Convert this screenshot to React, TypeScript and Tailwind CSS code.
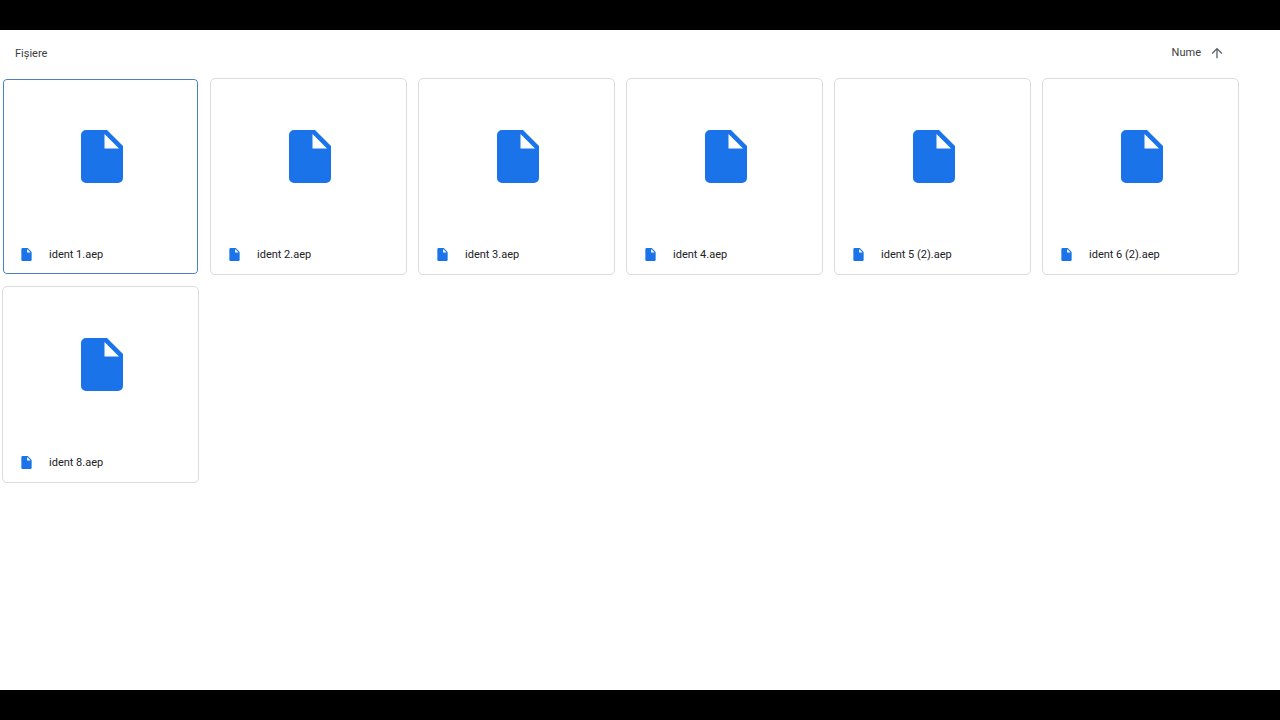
import { useState } from "react";

const FILES = ["ident 1.aep", "ident 2.aep", "ident 3.aep", "ident 4.aep", "ident 5 (2).aep", "ident 6 (2).aep", "ident 8.aep"];

function FileIcon({ className }: { className: string }) {
  return (
    <svg viewBox="0 0 42 53" className={className} aria-hidden="true">
      <path fill="#1a73e8" fillRule="evenodd" d="M5 0H26L42 16V48a5 5 0 0 1-5 5H5a5 5 0 0 1-5-5V5a5 5 0 0 1 5-5ZM23.500 4V18.500H38Z" />
    </svg>
  );
}

function SortArrow() {
  return (
    <svg viewBox="0 0 24 24" className="size-4 text-[#5f6368]" fill="currentColor" aria-hidden="true">
      <path d="M4 12l1.410 1.410L11 7.830V20h2V7.830l5.580 5.590L20 12l-8-8-8 8z" />
    </svg>
  );
}

function FileCard({ name, selected, onSelect }: { name: string; selected: boolean; onSelect: () => void }) {
  return (
    <button
      type="button"
      aria-pressed={selected}
      onClick={onSelect}
      className={`flex aspect-square flex-col rounded-[5px] border bg-white text-left outline-none ${selected ? "border-white inset-ring inset-ring-[#4a80c4]" : "border-[#dadce0]"}`}
    >
      <span className="flex w-full flex-1 items-center justify-center pl-[3px]">
        <FileIcon className="h-[53px] w-[42px]" />
      </span>
      <span className="flex h-10 w-full items-center gap-[17px] px-[18px]">
        <FileIcon className="h-[13px] w-[11px] shrink-0" />
        <span className="truncate pt-px text-[11px] leading-4 text-[#202124]">{name}</span>
      </span>
    </button>
  );
}

export default function App() {
  const [selected, setSelected] = useState(FILES[0]);
  const [ascending, setAscending] = useState(true);
  const files = ascending ? FILES : [...FILES].reverse();

  return (
    <div className="flex min-h-screen flex-col bg-black py-[30px] font-[Roboto,sans-serif]">
      <main className="flex-1 bg-white pr-[41px] pl-[2px]">
        <header className="flex h-12 items-center justify-between pr-[14px] pl-[13px] text-[11px] leading-4 text-[#3c4043]">
          <h1>Fișiere</h1>
          <button type="button" onClick={() => setAscending(!ascending)} className="flex items-center gap-2 pb-[2px]">
            Nume
            <span className={ascending ? "" : "rotate-180"}>
              <SortArrow />
            </span>
          </button>
        </header>
        <div className="grid grid-cols-6 gap-[11px]">
          {files.map((name) => (
            <FileCard key={name} name={name} selected={name === selected} onSelect={() => setSelected(name)} />
          ))}
        </div>
      </main>
    </div>
  );
}
